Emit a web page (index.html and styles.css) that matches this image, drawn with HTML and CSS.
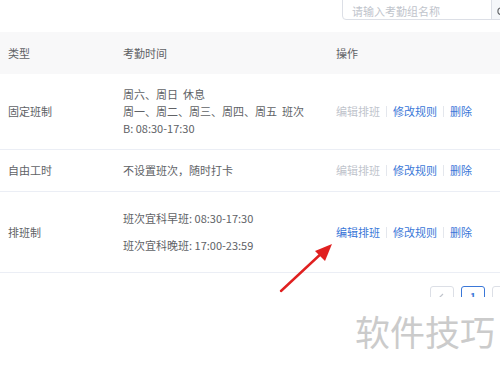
FILE: index.html
```html
<!DOCTYPE html>
<html lang="zh-CN">
<head>
    <meta charset="UTF-8">
    <title>考勤组</title>
    <link rel="stylesheet" href="styles.css">
</head>
<body>
    <div class="toolbar">
        <div class="search">
            <span class="search-input">请输入考勤组名称</span>
            <span class="search-btn">
                <svg width="10" height="10" viewBox="0 0 10 10"><circle cx="4.2" cy="4.2" r="3.3" fill="none" stroke="#606266" stroke-width="1.1"/><line x1="6.6" y1="6.6" x2="9.3" y2="9.3" stroke="#606266" stroke-width="1.1"/></svg>
            </span>
        </div>
    </div>

    <table class="group-table">
        <colgroup>
            <col class="col-type">
            <col class="col-time">
            <col class="col-ops">
        </colgroup>
        <thead>
            <tr class="head-row">
                <th>类型</th>
                <th>考勤时间</th>
                <th>操作</th>
            </tr>
        </thead>
        <tbody>
            <tr class="row-fixed">
                <td>固定班制</td>
                <td>周六、周日&nbsp;&nbsp;休息<br>周一、周二、周三、周四、周五&nbsp;&nbsp;班次 B: 08:30-17:30</td>
                <td>
                    <span class="op disabled">编辑排班</span><span class="sep"></span><span class="op">修改规则</span><span class="sep"></span><span class="op">删除</span>
                </td>
            </tr>
            <tr class="row-free">
                <td>自由工时</td>
                <td>不设置班次，随时打卡</td>
                <td>
                    <span class="op disabled">编辑排班</span><span class="sep"></span><span class="op">修改规则</span><span class="sep"></span><span class="op">删除</span>
                </td>
            </tr>
            <tr class="row-shift">
                <td>排班制</td>
                <td>
                    <p class="shift">班次宜科早班: 08:30-17:30</p>
                    <p class="shift">班次宜科晚班: 17:00-23:59</p>
                </td>
                <td>
                    <span class="op">编辑排班</span><span class="sep"></span><span class="op">修改规则</span><span class="sep"></span><span class="op">删除</span>
                </td>
            </tr>
        </tbody>
    </table>

    <div class="pager">
        <span class="page-btn">
            <svg width="8" height="8" viewBox="0 0 8 8"><polyline points="5,1 2,4 5,7" fill="none" stroke="#c0c4cc" stroke-width="1.2"/></svg>
        </span>
        <span class="page-btn active">1</span>
        <span class="page-btn">
            <svg width="8" height="8" viewBox="0 0 8 8"><polyline points="3,1 6,4 3,7" fill="none" stroke="#c0c4cc" stroke-width="1.2"/></svg>
        </span>
    </div>

    <div class="watermark">软件技巧</div>

    <svg class="arrow" width="70" height="70" viewBox="0 0 70 70">
        <line x1="11" y1="59" x2="54" y2="19" stroke="#e02020" stroke-width="2.4" stroke-linecap="round"/>
        <polygon points="62,12 45,19 55,29" fill="#e02020"/>
    </svg>
</body>
</html>
```

FILE: styles.css
```css
body { margin: 0; width: 500px; height: 369px; overflow: hidden; position: relative; background: #fff; font-family: "Noto Sans CJK SC", "Noto Sans", sans-serif; font-size: 11px; color: #606266; }

/* search bar */
.toolbar { display: flex; align-items: flex-start; height: 32px; padding-left: 342px; }
.search { display: flex; flex-shrink: 0; width: 190px; height: 28px; margin-top: -8px; border: 1px solid #dcdfe6; border-radius: 4px; box-sizing: border-box; background: #fff; }
.search-input { flex: 1; padding: 10px 0 0 9px; color: #c0c4cc; line-height: 16px; }
.search-btn { width: 40px; border-left: 1px solid #dcdfe6; padding: 11px 0 0 5px; background: #f5f7fa; box-sizing: border-box; }

/* table */
.group-table { width: 560px; table-layout: fixed; border-collapse: collapse; }
.col-type { width: 115px; }
.col-time { width: 213px; }
.group-table th { height: 42px; background: #f8f8f9; font-weight: normal; text-align: left; padding: 0 8px; color: #5f6165; }
.group-table td { padding: 0 8px; border-bottom: 1px solid #ebeef5; line-height: 17px; vertical-align: middle; }
.group-table td:nth-child(2) { padding-right: 20px; }
.row-fixed td { height: 75px; }
.row-free td { height: 41px; }
.row-shift td { height: 80px; }
.shift { margin: 0; line-height: 17px; }
.shift + .shift { margin-top: 10px; }

.op { color: #3a77d8; }
.op.disabled { color: #c0c4cc; }
.sep { display: inline-block; width: 1px; height: 11px; background: #e4e7ed; margin: 0 6px; vertical-align: -1px; }

.pager { display: flex; gap: 7px; height: 11px; overflow: hidden; margin-top: 13px; padding-left: 430px; }
.page-btn { flex-shrink: 0; width: 24px; height: 22px; border: 1px solid #dcdfe6; border-radius: 3px; box-sizing: border-box; text-align: center; line-height: 14px; font-size: 10px; color: #c0c4cc; padding-top: 3px; }
.page-btn svg { display: block; margin: 3px auto 0; }
.page-btn.active { border-color: #3a77d8; color: #3a77d8; font-weight: bold; }

/* overlays */
.watermark { position: absolute; left: 355px; top: 303px; font-size: 35px; line-height: 56px; color: #cbcbcb; }
.arrow { position: absolute; left: 270px; top: 232px; }
```
